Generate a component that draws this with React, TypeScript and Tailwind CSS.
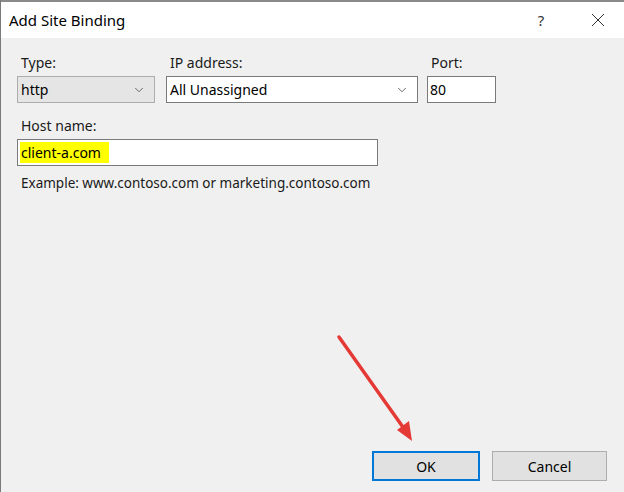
import { ChevronDown } from 'lucide-react'

const font = { fontFamily: '"Noto Sans", "Segoe UI", sans-serif' }

function Label({ children }: { children: React.ReactNode }) {
  return <div className="text-[14px] leading-[18px] text-[#1a1a1a] mb-[4px] pl-[4px]">{children}</div>
}

export default function App() {
  return (
    <div className="relative w-[624px] h-[492px] flex flex-col overflow-hidden bg-[#f0f0f0] border-l border-[#7a7a7a]" style={font}>
      {/* title bar */}
      <div className="h-[38px] shrink-0 bg-white border-t-2 border-[#8a8a8a] flex items-center pl-[8px]">
        <span className="text-[15px] text-black">Add Site Binding</span>
        <span className="ml-auto text-[15px] text-[#333] w-[20px] text-center mr-[32px]">?</span>
        <svg width="14" height="14" viewBox="0 0 14 14" className="mr-[19px] ml-[8px]">
          <path d="M1 1 L13 13 M13 1 L1 13" stroke="#333" strokeWidth="1" fill="none" />
        </svg>
      </div>

      {/* body */}
      <div className="flex-1 flex flex-col pl-[16px] pr-[17px] pt-[16px]">
        <div className="flex items-start">
          <div className="w-[138px]">
            <Label>Type:</Label>
            <div className="h-[27px] bg-[#e5e5e5] border border-[#adadad] flex items-center pl-[3px] pr-[8px] text-[14px] text-black">
              <span>http</span>
              <ChevronDown className="ml-auto w-[14px] h-[14px] text-[#555]" strokeWidth={1.5} />
            </div>
          </div>
          <div className="w-[252px] ml-[11px]">
            <Label>IP address:</Label>
            <div className="h-[27px] bg-white border border-[#7a7a7a] flex items-center pl-[3px] pr-[8px] text-[14px] text-black">
              <span>All Unassigned</span>
              <ChevronDown className="ml-auto w-[14px] h-[14px] text-[#555]" strokeWidth={1.5} />
            </div>
          </div>
          <div className="w-[69px] ml-[9px]">
            <Label>Port:</Label>
            <div className="h-[27px] bg-white border border-[#7a7a7a] flex items-center pl-[2px] text-[14px] text-black">80</div>
          </div>
        </div>

        <div className="mt-[14px] w-[361px]">
          <Label>Host name:</Label>
          <div className="h-[27px] bg-white border border-[#7a7a7a] flex items-center pl-[2px] text-[14px] text-black">
            <span className="bg-[#ffff00] px-[1px] leading-[21px] pr-[8px]">client-a.com</span>
          </div>
        </div>

        <div className="mt-[7px] pl-[4px] text-[13.5px] text-[#1a1a1a]">Example: www.contoso.com or marketing.contoso.com</div>

        <div className="flex-1" />

        <div className="flex justify-end gap-[12px] mb-[11px] mr-[0px]">
          <button className="w-[108px] h-[30px] bg-[#e1e1e1] border-2 border-[#0078d7] text-[14px] text-black">OK</button>
          <button className="w-[115px] h-[30px] bg-[#e1e1e1] border border-[#adadad] text-[14px] text-black">Cancel</button>
        </div>
      </div>

      {/* annotation arrow */}
      <svg className="absolute left-0 top-0 pointer-events-none" width="624" height="492">
        <line x1="338" y1="337" x2="404" y2="430" stroke="#e53935" strokeWidth="3.5" strokeLinecap="round" />
        <polygon points="411,441 396,430 408,421" fill="#e53935" />
      </svg>
    </div>
  )
}
